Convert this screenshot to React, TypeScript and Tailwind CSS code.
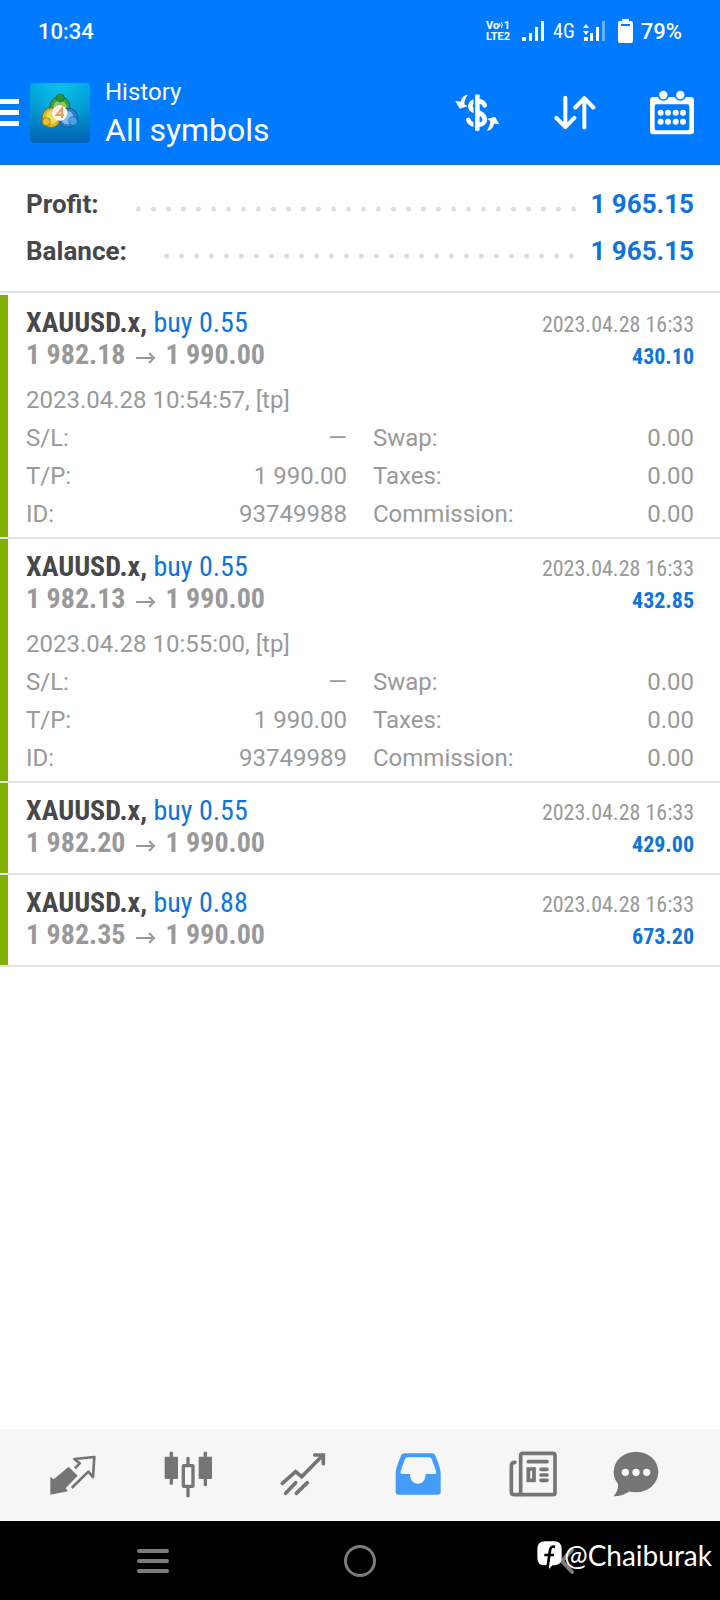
import type { ReactNode } from 'react';

type Details = {
  opened: string;
  left: [string, string][];
  right: [string, string][];
};

type Deal = {
  symbol: string;
  side: string;
  open: string;
  close: string;
  time: string;
  profit: string;
  details?: Details;
};

const costs: [string, string][] = [
  ['Swap:', '0.00'],
  ['Taxes:', '0.00'],
  ['Commission:', '0.00'],
];

const deals: Deal[] = [
  {
    symbol: 'XAUUSD.x,',
    side: 'buy 0.55',
    open: '1 982.18',
    close: '1 990.00',
    time: '2023.04.28 16:33',
    profit: '430.10',
    details: {
      opened: '2023.04.28 10:54:57, [tp]',
      left: [['S/L:', '—'], ['T/P:', '1 990.00'], ['ID:', '93749988']],
      right: costs,
    },
  },
  {
    symbol: 'XAUUSD.x,',
    side: 'buy 0.55',
    open: '1 982.13',
    close: '1 990.00',
    time: '2023.04.28 16:33',
    profit: '432.85',
    details: {
      opened: '2023.04.28 10:55:00, [tp]',
      left: [['S/L:', '—'], ['T/P:', '1 990.00'], ['ID:', '93749989']],
      right: costs,
    },
  },
  {
    symbol: 'XAUUSD.x,',
    side: 'buy 0.55',
    open: '1 982.20',
    close: '1 990.00',
    time: '2023.04.28 16:33',
    profit: '429.00',
  },
  {
    symbol: 'XAUUSD.x,',
    side: 'buy 0.88',
    open: '1 982.35',
    close: '1 990.00',
    time: '2023.04.28 16:33',
    profit: '673.20',
  },
];

function StatusBar() {
  return (
    <div className="flex h-[62px] items-center justify-between px-[38px] text-[22px] font-medium">
      <span>10:34</span>
      <div className="flex items-center">
        <div className="mr-3 flex w-6 flex-col text-[11px] leading-[11px] font-bold">
          <span className="flex justify-between">
            <span>Vo</span>
            <svg viewBox="0 0 6 10" className="h-[10px] w-[6px]" fill="none" stroke="currentColor" strokeWidth="1.3">
              <path d="M0.5 2.5q2 2.5 0 5M3 1q3 4 0 8" />
            </svg>
            <span>1</span>
          </span>
          <span>LTE2</span>
        </div>
        <svg viewBox="0 0 23 20" className="h-5 w-[23px]" fill="currentColor">
          <path d="M0 16h4v4H0zM7 12h3v8H7zM13 6h3v14h-3zM19 0h3v20h-3z" />
        </svg>
        <span className="mx-2 font-['Roboto_Condensed','Liberation_Sans_Narrow',Roboto,sans-serif] text-xl font-normal">
          4G
        </span>
        <svg viewBox="0 0 23 20" className="mr-3 h-5 w-[23px]" fill="currentColor">
          <path d="M1 16h4v4H1zM7 12h3v8H7zM13 6h3v14h-3z" />
          <path d="M3 3l3 4H0zM3 14l3-4H0z" />
          <path d="M19 0h3v20h-3z" opacity="0.4" />
        </svg>
        <svg viewBox="0 0 15 24" className="mr-2 h-6 w-[15px]">
          <path d="M4 0h7v2h2q2 0 2 2v18q0 2-2 2H2q-2 0-2-2V4q0-2 2-2h2z" fill="currentColor" />
          <path d="M3 5h9v2H3z" fill="#007aff" />
        </svg>
        <span>79%</span>
      </div>
    </div>
  );
}

function AppLogo() {
  return (
    <svg viewBox="0 0 180 180" className="size-[60px]" role="img" aria-label="MetaTrader 4">
      <defs>
        <linearGradient id="tile" x1="0" y1="0" x2="0" y2="1">
          <stop offset="0" stopColor="#00a3dc" />
          <stop offset="0.5" stopColor="#0590cf" />
          <stop offset="1" stopColor="#0062b4" />
        </linearGradient>
        <radialGradient id="glow" cx="0.5" cy="0.1" r="0.6">
          <stop offset="0" stopColor="#0cc0e8" />
          <stop offset="1" stopColor="#0cc0e8" stopOpacity="0" />
        </radialGradient>
      </defs>
      <rect width="180" height="180" rx="12" fill="url(#tile)" />
      <rect width="180" height="180" rx="12" fill="url(#glow)" />
      <ellipse cx="90" cy="72" rx="30" ry="32" fill="#3f9c47" stroke="#1c6b3a" strokeWidth="3" />
      <ellipse cx="90" cy="74" rx="20" ry="22" fill="#8fcb5b" />
      <ellipse cx="64" cy="104" rx="28" ry="30" fill="#d8b322" stroke="#6d6a1d" strokeWidth="3" />
      <ellipse cx="66" cy="102" rx="18" ry="20" fill="#f1dc5c" />
      <ellipse cx="114" cy="104" rx="29" ry="29" fill="#2b7fd0" stroke="#155a9d" strokeWidth="3" />
      <ellipse cx="112" cy="104" rx="19" ry="20" fill="#7cbdf0" />
      <circle cx="91" cy="45" r="12" fill="#2f9238" stroke="#1c6b3a" strokeWidth="2" />
      <circle cx="49" cy="116" r="12" fill="#e8c32e" stroke="#6d6a1d" strokeWidth="2" />
      <circle cx="129" cy="114" r="13" fill="#4ba0e6" stroke="#155a9d" strokeWidth="2" />
      <circle cx="89" cy="90" r="23" fill="#fff6ee" />
      <path d="M96 106V76L80 96h22" fill="none" stroke="#ef9a5e" strokeWidth="6" />
    </svg>
  );
}

function ToolButton({ label, children }: { label: string; children: ReactNode }) {
  return (
    <button type="button" aria-label={label} className="flex h-full w-[97px] items-center justify-center">
      {children}
    </button>
  );
}

function Header() {
  return (
    <header className="border-b-2 border-[#1470d8] bg-[#007aff] text-white">
      <StatusBar />
      <div className="flex h-[101px] items-center">
        <button type="button" aria-label="Menu" className="flex w-[19px] flex-col gap-[6px]">
          <span className="h-[5px] bg-white" />
          <span className="h-[5px] bg-white" />
          <span className="h-[5px] bg-white" />
        </button>
        <div className="ml-[11px]">
          <AppLogo />
        </div>
        <div className="ml-[15px] flex-1 pb-[2px]">
          <p className="text-2xl leading-9">History</p>
          <h1 className="text-[32px] leading-10">All symbols</h1>
        </div>
        <ToolButton label="Currency">
          <svg viewBox="0 0 141 120" className="h-10 w-[47px]" fill="currentColor">
            <path d="M42 5Q24 6 20 26L4 24L17 47L41 40L31 34Q32 16 42 5Z" />
            <path d="M98 113Q116 112 120 92L136 94L123 71L99 78L109 84Q108 102 98 113Z" />
            <path d="M63 6q7-5 14 0v106q-7 5-14 0z" />
            <path
              d="M92 37C86 20 50 20 49 38C48 62 92 52 92 80C92 100 50 102 43 81"
              fill="none"
              stroke="currentColor"
              strokeWidth="14"
              strokeLinecap="round"
            />
            <path d="M61 18v84" stroke="#007aff" strokeWidth="5" />
          </svg>
        </ToolButton>
        <ToolButton label="Sort">
          <svg
            viewBox="0 0 126 104"
            className="h-[35px] w-[42px]"
            fill="none"
            stroke="currentColor"
            strokeWidth="12"
            strokeLinecap="round"
            strokeLinejoin="round"
          >
            <path d="M34 8v88M7 68l27 28 27-28M91 97V9M64 37L91 9l27 28" />
          </svg>
        </ToolButton>
        <ToolButton label="Period">
          <svg viewBox="0 0 132 135" className="h-[45px] w-11" fill="currentColor">
            <path
              fillRule="evenodd"
              d="M10 21h112q10 0 10 10v92q0 10-10 10H10q-10 0-10-10V31q0-10 10-10zM20 43q-6 0-6 6v66q0 6 6 6h92q6 0 6-6V49q0-6-6-6z"
            />
            <g stroke="#007aff" strokeWidth="5">
              <circle cx="40" cy="15" r="15" />
              <circle cx="91" cy="15" r="15" />
            </g>
            {[68, 95].map((y) => [32, 54, 77, 99].map((x) => <circle key={`${x}-${y}`} cx={x} cy={y} r="9" />))}
          </svg>
        </ToolButton>
      </div>
    </header>
  );
}

function SummaryRow({ label, value }: { label: string; value: string }) {
  return (
    <div className="flex h-[47px] items-center text-[26px] font-bold">
      <dt className="text-[#47474a]">{label}</dt>
      <dd className="flex flex-1 items-center text-[#0f74da]">
        <span className="mt-2 mr-3 ml-8 h-[6px] flex-1 bg-[radial-gradient(circle,#dedede_2px,transparent_3px)] bg-[length:15px_6px] bg-repeat-x" />
        {value}
      </dd>
    </div>
  );
}

function DetailList({ rows }: { rows: [string, string][] }) {
  return (
    <dl>
      {rows.map(([label, value]) => (
        <div key={label} className="flex justify-between">
          <dt>{label}</dt>
          <dd>{value}</dd>
        </div>
      ))}
    </dl>
  );
}

function DealRow({ deal }: { deal: Deal }) {
  const { details } = deal;

  return (
    <li className="border-b-2 border-[#e2e2e2]">
      <div className="border-l-8 border-[#7fb000] pr-[26px] pl-[18px]">
        <div className="pt-3 font-['Roboto_Condensed','Liberation_Sans_Narrow',Roboto,sans-serif] text-[28px] leading-8">
          <div className="flex h-8 items-baseline justify-between">
            <h2 className="text-[#0f74da]">
              <span className="font-bold text-[#47474a]">{deal.symbol}</span> {deal.side}
            </h2>
            <time className="text-[22px] leading-8 text-[#999]">{deal.time}</time>
          </div>
          <div className="flex h-8 items-baseline justify-between font-bold">
            <p className="flex items-baseline text-[#999]">
              {deal.open}
              <svg viewBox="0 0 20 12" className="mx-[10px] h-3 w-5" fill="none" stroke="currentColor" strokeWidth="2">
                <path d="M0 6h18M13 1l5 5-5 5" />
              </svg>
              {deal.close}
            </p>
            <span className="text-[22px] leading-8 text-[#0f74da]">{deal.profit}</span>
          </div>
        </div>
        {details ? (
          <div className="pt-[10px] pb-1 text-2xl leading-[38px] text-[#999]">
            <p>{details.opened}</p>
            <div className="grid grid-cols-2 gap-[26px]">
              <DetailList rows={details.left} />
              <DetailList rows={details.right} />
            </div>
          </div>
        ) : (
          <div className="h-[14px]" />
        )}
      </div>
    </li>
  );
}

function Tab({ label, active, children }: { label: string; active?: boolean; children: ReactNode }) {
  return (
    <a
      href="#"
      aria-label={label}
      aria-current={active ? 'page' : undefined}
      className={`flex items-center justify-center ${active ? 'text-[#449cf9]' : 'text-[#757575]'}`}
    >
      <svg viewBox="0 0 144 144" className="size-12" fill="currentColor">
        {children}
      </svg>
    </a>
  );
}

function TabBar() {
  return (
    <nav className="grid h-[92px] grid-cols-[repeat(5,115fr)_92fr] bg-[#f6f6f6] pr-[38px] pl-[15px]">
      <Tab label="Quotes">
        <path d="M4 77l10 8 45-38 27 27-36 38 7 9-53 10z" />
        <path
          d="M78 52L92 37L76 24L136 18L132 78L118 62L68 111"
          fill="none"
          stroke="currentColor"
          strokeWidth="8"
          strokeLinejoin="round"
        />
      </Tab>
      <Tab label="Charts">
        <rect x="2" y="17" width="40" height="67" rx="3" />
        <rect x="17" y="2" width="10" height="99" rx="3" />
        <rect x="58" y="44" width="29" height="62" rx="2" fill="none" stroke="currentColor" strokeWidth="10" />
        <rect x="67" y="18" width="10" height="26" rx="3" />
        <rect x="67" y="108" width="10" height="31" rx="3" />
        <rect x="104" y="17" width="40" height="67" rx="3" />
        <rect x="119" y="2" width="10" height="103" rx="3" />
      </Tab>
      <Tab label="Trade">
        <g fill="none" stroke="currentColor" strokeWidth="11" strokeLinecap="round">
          <path d="M10 97L50 62L68 77L130 14M107 12h26v26M20 127l30-32M52 127l33-32" />
        </g>
      </Tab>
      <Tab label="History" active>
        <path
          fillRule="evenodd"
          d="M32 7H113Q121 7 124 14Q140 50 140 68V124Q140 131 133 131H12Q5 131 5 124V68Q5 50 21 14Q24 7 32 7ZM40 19Q35 19 33 24L20 60Q18 69 24 69H48C48 108 95 108 95 69H122Q128 69 126 60L113 24Q111 19 106 19Z"
        />
      </Tab>
      <Tab label="News">
        <g fill="none" stroke="currentColor" strokeWidth="11" strokeLinecap="round">
          <rect x="35" y="7" width="103" height="124" rx="6" />
          <path d="M18 34Q7 34 7 44V122Q7 131 16 131H36M58 32h56M96 55h18M96 72h18M96 88h18" />
          <rect x="58" y="54" width="17" height="34" />
        </g>
      </Tab>
      <Tab label="Messages">
        <ellipse cx="72" cy="63" rx="67" ry="61" />
        <path d="M18 96Q20 120 5 136Q32 136 54 120z" />
        <g fill="#f6f6f6">
          <circle cx="40" cy="64" r="11" />
          <circle cx="72" cy="64" r="11" />
          <circle cx="104" cy="64" r="11" />
        </g>
      </Tab>
    </nav>
  );
}

function SystemBar() {
  return (
    <div className="relative grid h-[79px] grid-cols-3 bg-black px-[50px] text-[#7c7c7c]">
      <button type="button" aria-label="Recent apps" className="flex flex-col items-center justify-center gap-[6px]">
        <span className="h-1 w-8 rounded-full bg-current" />
        <span className="h-1 w-8 rounded-full bg-current" />
        <span className="h-1 w-8 rounded-full bg-current" />
      </button>
      <button type="button" aria-label="Home" className="flex items-center justify-center">
        <span className="size-8 rounded-full border-[3px] border-current" />
      </button>
      <button type="button" aria-label="Back" className="flex items-center justify-center">
        <svg
          viewBox="0 0 16 28"
          className="h-7 w-4"
          fill="none"
          stroke="currentColor"
          strokeWidth="4"
          strokeLinecap="round"
        >
          <path d="M13 3L3 14l10 11" />
        </svg>
      </button>
      <div className="absolute top-4 right-2 flex items-center gap-[2px] text-white">
        <svg viewBox="0 0 75 84" className="h-7 w-[25px]">
          <path d="M24 1h28q22 0 22 24v26q0 20-20 22h-8l-10 11-2-11H24Q1 73 1 50V25Q1 1 24 1z" fill="#fff" />
          <path d="M54 18Q42 13 39 28L31 84M22 42h29" fill="none" stroke="#000" strokeWidth="8" />
        </svg>
        <span className="font-[Lato,'Noto_Sans',sans-serif] text-[28px] leading-9">@Chaiburak</span>
      </div>
    </div>
  );
}

export default function App() {
  return (
    <div className="flex min-h-screen flex-col bg-white font-[Roboto,sans-serif]">
      <Header />
      <main className="flex-1">
        <dl className="border-b-2 border-[#e2e2e2] px-[26px] pt-4 pb-4">
          <SummaryRow label="Profit:" value="1 965.15" />
          <SummaryRow label="Balance:" value="1 965.15" />
        </dl>
        <ul className="pt-[2px]">
          {deals.map((deal) => (
            <DealRow key={deal.open} deal={deal} />
          ))}
        </ul>
      </main>
      <TabBar />
      <SystemBar />
    </div>
  );
}
